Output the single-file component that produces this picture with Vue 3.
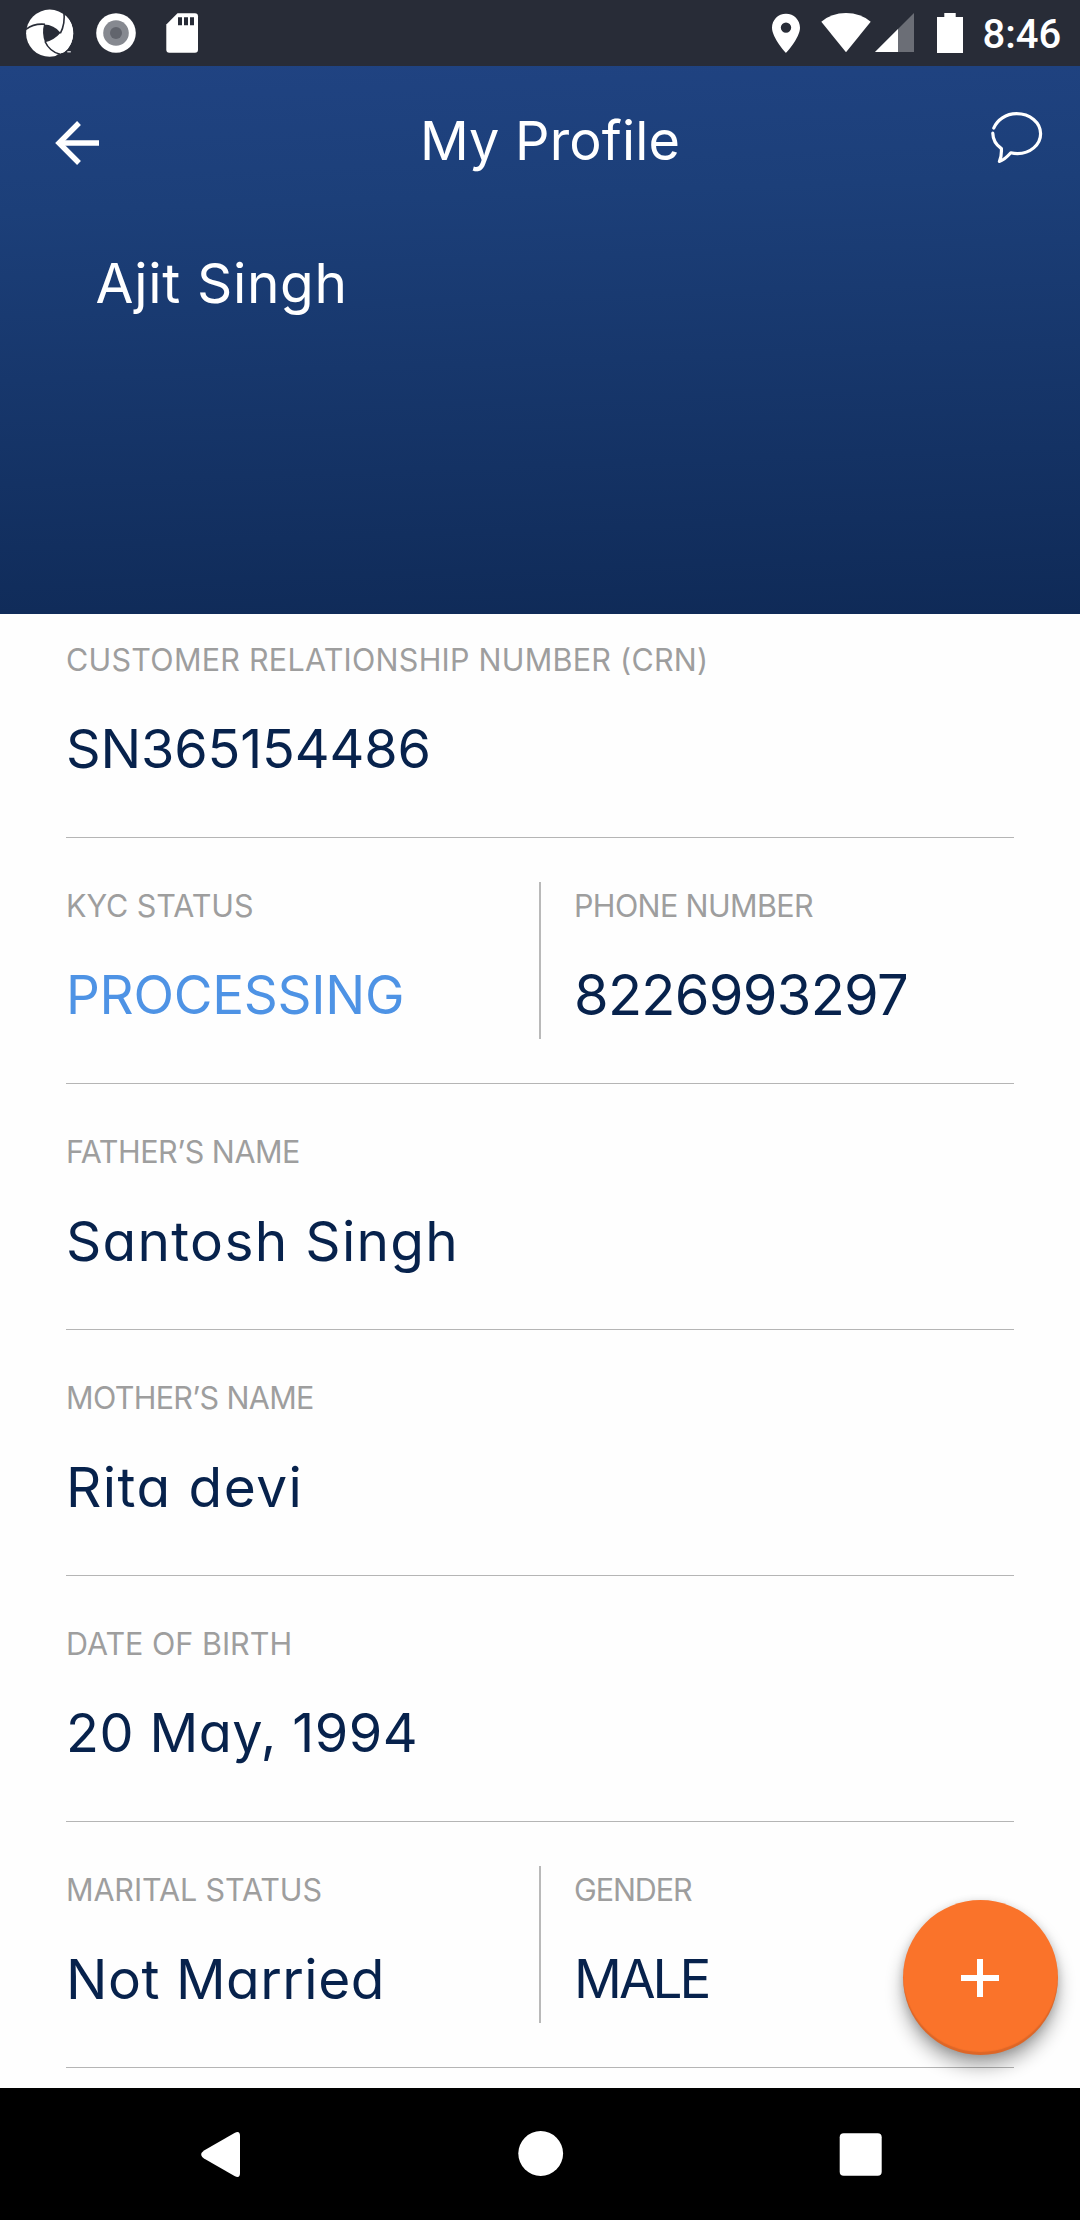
<script setup>
// `tracking` is the letter spacing in px; `size` overrides the default value size.
const rows = [
  [
    {
      label: 'CUSTOMER RELATIONSHIP NUMBER (CRN)', labelTracking: 0.25,
      value: 'SN365154486', size: 54, tracking: -0.15
    }
  ],
  [
    { label: 'KYC STATUS', labelTracking: -0.06, value: 'PROCESSING', tracking: -0.25, tone: 'info' },
    { label: 'PHONE NUMBER', labelTracking: -0.63, value: '8226993297', size: 56, tracking: -0.72 }
  ],
  [{ label: 'FATHER’S NAME', labelTracking: -0.47, value: 'Santosh Singh', size: 55, tracking: 1.3 }],
  [{ label: 'MOTHER’S NAME', labelTracking: -0.66, value: 'Rita devi', size: 55, tracking: 1.45 }],
  [{ label: 'DATE OF BIRTH', labelTracking: 0, value: '20 May, 1994', size: 54, tracking: 0.45 }],
  [
    { label: 'MARITAL STATUS', labelTracking: -0.11, value: 'Not Married', size: 55, tracking: 0.5 },
    { label: 'GENDER', labelTracking: -1.08, value: 'MALE', tracking: -2.97 }
  ]
]
</script>

<template>
  <div class="screen">
    <div class="status-bar">
      <div class="status-group">
        <svg class="logo" width="50" height="66" viewBox="25 0 50 66">
          <circle cx="49.700" cy="33.200" r="23.600" fill="#fff" />
          <path d="M44 24.600Q54 24.800 60.600 32.800Q54 40.500 45 42.200Q41.600 33.500 44 24.600Z" fill="#282c37" />
          <path d="M62 8H75V26L64.500 13.500Z" fill="#282c37" />
          <path d="M56.500 55L66 51.500L75 46V58H56.500Z" fill="#282c37" />
          <path d="M65.300 15.300Q73 22 73 33Q73 46 64 52.300Q58 54.500 53 51L60 34Q65.500 26 65.300 15.300Z" fill="#fff" />
          <g fill="none" stroke="#282c37" stroke-width="1.600">
            <path d="M45 24.300Q34 23.200 26 29.400" />
            <path d="M60.300 33.300Q65.500 24 63.800 11" />
            <path d="M45 41.500Q49.500 51.500 60 54.300" />
          </g>
          <path d="M67.300 51h3.500v1.500h-3.500z" fill="#c9cbd0" />
        </svg>
        <svg width="40" height="66" viewBox="96 0 40 66">
          <circle cx="116" cy="33" r="19.800" fill="#fff" />
          <circle cx="116" cy="33" r="12.800" fill="#868990" />
          <circle cx="116" cy="33" r="6" fill="#62656d" />
        </svg>
        <svg width="34" height="66" viewBox="165 0 34 66">
          <path d="M177.500 13.200H195Q198 13.200 198 16.200V49.800Q198 52.800 195 52.800H169.300Q166.300 52.800 166.300 49.800V24.500Z" fill="#fff" />
          <path d="M178 17.200h4v8h-4zM184 17.200h4v8h-4zM190 17.200h4v8h-4z" fill="#282c37" />
        </svg>
      </div>
      <div class="status-group status-right">
        <svg width="30" height="66" viewBox="770.500 0 30 66">
          <path d="M785.500 13.800C777.600 13.800 771.500 20 771.500 27.800C771.500 38 785.500 53 785.500 53S799.500 38 799.500 27.800C799.500 20 793.400 13.800 785.500 13.800ZM785.500 32.800A5.200 5.200 0 1 1 785.500 22.400A5.200 5.200 0 0 1 785.500 32.800Z" fill="#fff" />
        </svg>
        <svg class="wifi" width="50" height="66" viewBox="820.500 0 50 66">
          <path d="M845.500 52.300L820.800 21.700Q831 13 845.500 13T870.200 21.700Z" fill="#fff" />
        </svg>
        <svg class="signal" width="40" height="66" viewBox="875 0 40 66">
          <path d="M875 52L914 13V52Z" fill="#6b6e76" />
          <path d="M875 52L898 29V52Z" fill="#fff" />
        </svg>
        <svg class="battery" width="26" height="66" viewBox="937 0 26 66">
          <path d="M944.300 13h11.400v4h7.300v36h-26v-36h7.300z" fill="#fff" />
        </svg>
        <span class="clock">8:46</span>
      </div>
    </div>

    <header class="header">
      <div class="toolbar">
        <svg class="back" width="46" height="46" viewBox="54 120 46 46" fill="none" stroke="#fff">
          <path d="M99 143H60" stroke-width="5.600" />
          <path d="M79 123L59 143L79 163" stroke-width="5.400" />
        </svg>
        <h1 class="title">My Profile</h1>
        <svg class="chat" width="54" height="54" viewBox="990 111 54 54" fill="none" stroke="#fff" stroke-width="3.200" stroke-linecap="round" stroke-linejoin="round">
          <path d="M993.800 128C997 120 1006 113.600 1016.500 113.600C1030 113.600 1040.600 122.500 1040.600 133.800C1040.600 145 1030 153.600 1017.500 153.600C1015 153.600 1012.800 153.300 1010.800 152.800C1007.500 156.500 1003.500 160.500 999.400 161.400C1001.300 157.500 1001.600 152.500 1001.400 148.600C996.300 145 992.900 139.500 992.800 133.200" />
        </svg>
      </div>
      <p class="user-name">Ajit Singh</p>
    </header>

    <main class="details">
      <section v-for="(row, i) in rows" :key="i" class="row" :class="{ split: row.length > 1 }">
        <div v-for="field in row" :key="field.label" class="field">
          <div class="label" :style="{ letterSpacing: field.labelTracking + 'px' }">{{ field.label }}</div>
          <div
            class="value"
            :class="field.tone"
            :style="{ letterSpacing: field.tracking + 'px', fontSize: (field.size || 53) + 'px' }"
          >{{ field.value }}</div>
        </div>
      </section>
      <button class="fab" aria-label="Add">
        <svg width="40" height="40" viewBox="0 0 40 40">
          <path d="M1 20H39M20 1V39" stroke="#fff" stroke-width="6" />
        </svg>
      </button>
    </main>

    <nav class="nav-bar">
      <svg width="46" height="50" viewBox="198 2129 46 50">
        <path d="M204 2150.500L234.500 2133Q240 2130 240 2136V2173Q240 2179 234.500 2176L204 2158.500Q198.500 2154.500 204 2150.500Z" fill="#fff" />
      </svg>
      <svg width="46" height="50" viewBox="517 2129 46 50">
        <circle cx="539.700" cy="2153.500" r="22.400" fill="#fff" />
      </svg>
      <svg width="46" height="50" viewBox="838 2129 46 50">
        <rect x="839.700" y="2133.300" width="42" height="42.500" rx="4" fill="#fff" />
      </svg>
    </nav>
  </div>
</template>

<style>
body {
  margin: 0;
  background: #fff;
}
</style>

<style scoped>
.screen {
  width: 1080px;
  height: 2220px;
  display: flex;
  flex-direction: column;
  overflow: hidden;
  background: #fefefe;
  font-family: Inter, "Open Sans", sans-serif;
  font-feature-settings: "cv11";
}

svg {
  display: block;
  flex: none;
}

.status-bar {
  height: 66px;
  flex: none;
  display: flex;
  justify-content: space-between;
  background: #282c37;
}

.status-group {
  display: flex;
  gap: 29px;
  padding-left: 25px;
}

.logo {
  margin-right: -8px;
}

.status-right {
  gap: 0;
  width: 309.500px;
  padding: 0;
}

.wifi {
  margin-left: 20px;
}

.signal {
  margin-left: 4.500px;
}

.battery {
  margin-left: 22px;
}

.clock {
  margin-left: 19.500px;
  font: 500 40px/69px Roboto, sans-serif;
  color: #fff;
}

.header {
  height: 548px;
  flex: none;
  background: linear-gradient(178deg, #204382 0%, #1c3f79 25%, #0f2a57 100%);
  color: #fff;
}

.toolbar {
  height: 148px;
  display: flex;
  align-items: center;
  justify-content: space-between;
  padding: 0 36px 0 54px;
}

.back {
  margin-top: 6px;
}

.chat {
  margin-bottom: 4px;
}

.title {
  margin: 2px 0 0;
  padding-left: 10px;
  font-size: 54px;
  line-height: 70px;
  font-weight: 400;
  letter-spacing: 0.17px;
}

.user-name {
  margin: 34px 0 0 95.500px;
  font-size: 55px;
  line-height: 70px;
  letter-spacing: 0.68px;
}

.details {
  position: relative;
  height: 1474px;
  flex: none;
  padding: 0 66px;
  box-sizing: border-box;
}

.row {
  height: 246px;
  box-sizing: border-box;
  padding: 44px 0;
  display: grid;
  border-bottom: 1px solid #b5b5b5;
}

.row.split {
  grid-template-columns: 473px 1fr;
}

.row:first-child {
  height: 224px;
  padding-top: 22px;
}

.field {
  box-sizing: border-box;
  height: 157px;
  padding-top: 4px;
}

.field + .field {
  border-left: 2px solid #b9b9b9;
  padding-left: 33px;
}

.label {
  font-size: 30.500px;
  line-height: 40px;
  color: #9e9e9e;
  white-space: nowrap;
}

.value {
  margin-top: 34px;
  line-height: 70px;
  color: #07224c;
  white-space: nowrap;
}

.value.info {
  color: #4e93e5;
}

.fab {
  position: absolute;
  right: 22.500px;
  bottom: 33px;
  width: 155px;
  height: 155px;
  padding: 0;
  border: 0;
  border-radius: 50%;
  display: flex;
  align-items: center;
  justify-content: center;
  background: #fa732a;
  box-shadow:
    inset 0 -3px 1px rgba(120, 60, 30, 0.22),
    0 12px 18px rgba(0, 0, 0, 0.32),
    0 2px 8px rgba(0, 0, 0, 0.16);
}

.nav-bar {
  height: 132px;
  flex: none;
  box-sizing: border-box;
  padding: 0 196px 0 198px;
  display: flex;
  align-items: center;
  justify-content: space-between;
  background: #000;
}
</style>
